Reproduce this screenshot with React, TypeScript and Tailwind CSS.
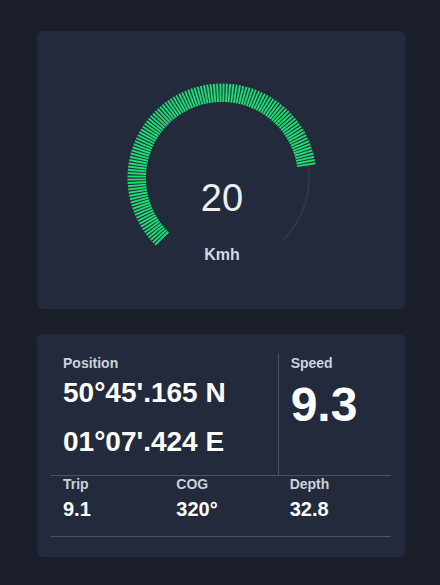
const VALUE = 20;
const MAX = 25;

const Gauge = ({ value }: { value: number }) => {
  const cx = 100;
  const cy = 100;
  const start = 225;
  const end = start - (value / MAX) * 270;
  const ticks: number[] = [];
  for (let a = start; a >= end - 0.01; a -= 2) ticks.push(a);
  const rad = (d: number) => (d * Math.PI) / 180;
  const tr = 87;
  const tx1 = cx + tr * Math.cos(rad(end));
  const ty1 = cy - tr * Math.sin(rad(end));
  const tx2 = cx + tr * Math.cos(rad(-45));
  const ty2 = cy - tr * Math.sin(rad(-45));

  return (
    <div className="relative ml-[85px] mt-[46px] h-[200px] w-[200px]">
      <svg width="200" height="200" viewBox="0 0 200 200">
        <path
          d={`M ${tx1} ${ty1} A ${tr} ${tr} 0 0 1 ${tx2} ${ty2}`}
          fill="none"
          stroke="#2e3548"
          strokeWidth="2.5"
          strokeLinecap="round"
        />
        {ticks.map((a) => (
          <line
            key={a}
            x1={cx + 76 * Math.cos(rad(a))}
            y1={cy - 76 * Math.sin(rad(a))}
            x2={cx + 94.5 * Math.cos(rad(a))}
            y2={cy - 94.5 * Math.sin(rad(a))}
            stroke="#1ede73"
            strokeWidth="1.9"
          />
        ))}
      </svg>
      <div className="absolute left-0 right-0 top-[101px] text-center text-[38px] leading-none font-normal text-[#eef0f4]">
        {value}
      </div>
      <div className="absolute left-0 right-0 top-[169px] text-center text-base leading-none font-bold text-[#d4d7de]">
        Kmh
      </div>
    </div>
  );
};

const Stat = ({ label, value }: { label: string; value: string }) => (
  <div className="pl-3">
    <p className="text-sm leading-none font-bold text-[#cdd1d9]">{label}</p>
    <p className="mt-1 text-xl leading-7 font-bold text-white">{value}</p>
  </div>
);

export default function App() {
  return (
    <div
      className="min-h-screen bg-[#1a1f2b] pl-[37px] pt-[31px]"
      style={{ fontFamily: '"Liberation Sans", Arial, sans-serif' }}
    >
      <div className="h-[278px] w-[368px] overflow-hidden rounded-md bg-[#232a3c] pt-px">
        <Gauge value={VALUE} />
      </div>

      <div className="mt-[25px] w-[368px] rounded-md bg-[#232a3c] px-[14px] pb-5 pt-[19px]">
        <div className="grid grid-cols-3">
          <div className="col-span-2 pb-[15px] pl-3">
            <p className="text-sm leading-5 font-bold text-[#cdd1d9]">Position</p>
            <p className="mt-[2px] text-[28px] leading-9 font-bold text-white">50°45'.165 N</p>
            <p className="mt-[13px] text-[28px] leading-9 font-bold text-white">01°07'.424 E</p>
          </div>
          <div className="border-l border-[#4b5265] pl-3">
            <p className="text-sm leading-5 font-bold text-[#cdd1d9]">Speed</p>
            <p className="mt-2 text-5xl leading-none font-bold text-white">9.3</p>
          </div>
        </div>
        <div className="grid grid-cols-3 border-y border-[#4b5265] pb-[13px] pt-px">
          <Stat label="Trip" value="9.1" />
          <Stat label="COG" value="320°" />
          <Stat label="Depth" value="32.8" />
        </div>
      </div>
    </div>
  );
}
